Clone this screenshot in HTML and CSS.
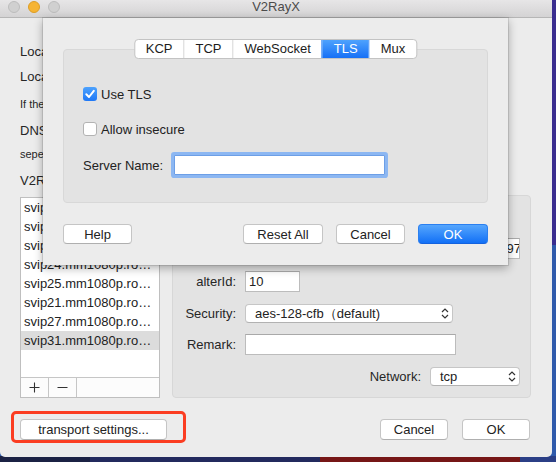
FILE: index.html
```html
<!DOCTYPE html>
<html>
<head>
<meta charset="utf-8">
<title>V2RayX</title>
<link rel="stylesheet" href="styles.css">
</head>
<body>
<div class="window">
  <div class="titlebar">
    <div class="lights">
      <span class="light"></span>
      <span class="light min"></span>
      <span class="light"></span>
    </div>
    <div class="title">V2RayX</div>
    <div></div>
  </div>

  <div class="content">
    <div class="lbl r1">Local socks port:</div>
    <div class="lbl r2">Local http port:</div>
    <div class="lbl small r3">If the http port is not needed, leave it empty.</div>
    <div class="lbl r4">DNS servers:</div>
    <div class="lbl small r5">seperated by commas</div>
    <div class="lbl r6">V2Ray servers:</div>

    <div class="servers">
      <div class="list">
        <div class="rows">
          <div class="row">svip22.mm1080p.ro…</div>
          <div class="row">svip23.mm1080p.ro…</div>
          <div class="row">svip26.mm1080p.ro…</div>
          <div class="row">svip24.mm1080p.ro…</div>
          <div class="row">svip25.mm1080p.ro…</div>
          <div class="row">svip21.mm1080p.ro…</div>
          <div class="row">svip27.mm1080p.ro…</div>
          <div class="row sel">svip31.mm1080p.ro…</div>
        </div>
        <div class="listbar">
          <span class="lb-btn"><svg width="11" height="11" viewBox="0 0 11 11"><path d="M5.5 0.5V10.5M0.5 5.5H10.5" stroke="#333" stroke-width="1.1" fill="none"/></svg></span>
          <span class="lb-btn"><svg width="11" height="11" viewBox="0 0 11 11"><path d="M0.5 5.5H10.5" stroke="#333" stroke-width="1.1" fill="none"/></svg></span>
        </div>
      </div>

      <div class="details">
        <div class="drow">
          <span class="dlabel">Address:</span>
          <span class="field addr">svip31.mm1080p.rocks</span>
          <span class="colon">:</span>
          <span class="field port">443</span>
        </div>
        <div class="drow g12">
          <span class="dlabel">User ID:</span>
          <span class="field uid"><span class="uid-text">6b1f0e2c-8d4a-4f7e-b3c2-5a9d0e1f2c97</span></span>
        </div>
        <div class="drow g12">
          <span class="dlabel">alterId:</span>
          <span class="field alter">10</span>
        </div>
        <div class="drow g11">
          <span class="dlabel">Security:</span>
          <span class="popup sec">aes-128-cfb（default)<svg class="chev" width="8" height="13" viewBox="0 0 8 13"><path d="M1 5L4 2L7 5M1 8L4 11L7 8" stroke="#333" stroke-width="1.2" fill="none"/></svg></span>
        </div>
        <div class="drow g10">
          <span class="dlabel">Remark:</span>
          <span class="field remark"></span>
        </div>
        <div class="drow g11 end">
          <span class="nlabel">Network:</span>
          <span class="popup net">tcp<svg class="chev" width="8" height="13" viewBox="0 0 8 13"><path d="M1 5L4 2L7 5M1 8L4 11L7 8" stroke="#333" stroke-width="1.2" fill="none"/></svg></span>
        </div>
      </div>
    </div>

    <div class="bottom">
      <div class="transport">
        <button class="btn tbtn">transport settings...</button>
      </div>
      <div class="actions">
        <button class="btn w68">Cancel</button>
        <button class="btn w68">OK</button>
      </div>
    </div>
  </div>

  <div class="sheet">
    <div class="group">
      <div class="seg">
        <span class="sg">KCP</span>
        <span class="sg">TCP</span>
        <span class="sg">WebSocket</span>
        <span class="sg on">TLS</span>
        <span class="sg">Mux</span>
      </div>
      <label class="check">
        <span class="box checked"><svg width="14" height="14" viewBox="0 0 14 14"><path d="M3.3 7.3L6 10L10.8 3.8" stroke="#fff" stroke-width="2" fill="none" stroke-linecap="round" stroke-linejoin="round"/></svg></span>
        <span>Use TLS</span>
      </label>
      <label class="check c2">
        <span class="box"></span>
        <span>Allow insecure</span>
      </label>
      <div class="srow">
        <span>Server Name:</span>
        <span class="sfield"></span>
      </div>
    </div>
    <div class="sheet-actions">
      <button class="btn s-help">Help</button>
      <button class="btn s-reset">Reset All</button>
      <button class="btn s-cancel">Cancel</button>
      <button class="btn s-ok">OK</button>
    </div>
  </div>
</div>
</body>
</html>
```

FILE: styles.css
```css
* { box-sizing: border-box; }

html, body { margin: 0; }

body {
  width: 556px;
  height: 462px;
  overflow: hidden;
  font-family: "Liberation Sans", Arial, sans-serif;
  font-size: 13px;
  color: #262626;
  background:
    linear-gradient(90deg, #1b2244 0 90px, #232a5e 90px 320px, #761616 320px 520px, #2b3f86 520px) left bottom / 100% 6px no-repeat,
    linear-gradient(180deg, #3a2d8f 0 245px, #2f5aab 245px);
}

.window {
  position: relative;
  width: 552px;
  height: 461px;
  margin-top: -4px;
  background: #ececec;
  border-radius: 5px;
  overflow: hidden;
}

.titlebar {
  height: 22px;
  display: grid;
  grid-template-columns: 1fr auto 1fr;
  align-items: center;
  padding: 0 8px;
  background: linear-gradient(#ebeaeb, #d4d3d4);
  border-bottom: 1px solid #b6b6b6;
}

.lights { display: flex; gap: 8px; }

.light {
  width: 12px;
  height: 12px;
  border-radius: 50%;
  background: #d0d0d0;
  border: 1px solid #bcbcbc;
}

.light.min { background: #f6b433; border-color: #dc9d26; }

.title { color: #4b4b4b; font-size: 13px; }

.content { padding: 0 21px 0 20px; }

.lbl { height: 16px; line-height: 16px; white-space: nowrap; }
.small { font-size: 11px; height: 14px; line-height: 14px; }
.r1 { margin-top: 26px; }
.r2 { margin-top: 9px; }
.r3 { margin-top: 12px; }
.r4 { margin-top: 12px; }
.r5 { margin-top: 8px; }
.r6 { margin-top: 12px; }

.servers {
  display: flex;
  gap: 12px;
  margin-top: 6px;
  height: 203px;
}

.list {
  width: 140px;
  height: 201px;
  margin-top: 2px;
  background: #fff;
  border: 1px solid #bfbfbf;
  display: flex;
  flex-direction: column;
}

.rows { flex: 1; }

.row {
  height: 19px;
  line-height: 19px;
  padding-left: 3px;
  white-space: nowrap;
  overflow: hidden;
  color: #222;
}

.row.sel { background: #dcdcdc; }

.listbar {
  height: 20px;
  border-top: 1px solid #c6c6c6;
  display: flex;
  background: #fcfcfc;
}

.lb-btn {
  width: 28px;
  border-right: 1px solid #c6c6c6;
  display: flex;
  align-items: center;
  justify-content: center;
}

.details {
  flex: 1;
  background: #e3e3e3;
  border: 1px solid #d7d7d7;
  border-radius: 4px;
  padding: 9px 10px 0 0;
}

.drow { display: flex; align-items: center; height: 21px; }
.g12 { margin-top: 12px; }
.g11 { margin-top: 11px; }
.g10 { margin-top: 10px; }
.drow.end { justify-content: flex-end; }

.dlabel { width: 63px; text-align: right; margin-right: 9px; }
.nlabel { margin-right: 9px; }

.field {
  height: 21px;
  background: #fff;
  border: 1px solid #bcbcbc;
  border-top-color: #a9a9a9;
  padding: 0 3px;
  display: flex;
  align-items: center;
  white-space: nowrap;
  color: #222;
}

.addr { width: 190px; }
.colon { margin: 0 4px; }
.port { width: 50px; }
.uid { flex: 1; justify-content: flex-end; overflow: hidden; padding-right: 0; }
.uid-text { margin-right: -2px; }
.alter { width: 55px; }
.remark { width: 211px; }

.popup {
  height: 19px;
  background: #fff;
  border: 1px solid #c6c6c6;
  border-bottom-color: #b2b2b2;
  border-radius: 4px;
  display: flex;
  align-items: center;
  justify-content: space-between;
  padding: 0 3px 0 9px;
  color: #222;
  white-space: nowrap;
}

.sec { width: 208px; }
.net { width: 90px; }

.bottom {
  display: flex;
  justify-content: space-between;
  align-items: flex-start;
  margin-top: 21px;
}

.btn {
  height: 21px;
  padding: 0;
  margin: 0;
  background: #fff;
  border: 1px solid #c5c5c5;
  border-bottom-color: #afafaf;
  border-radius: 4px;
  font-family: "Liberation Sans", Arial, sans-serif;
  font-size: 13px;
  color: #222;
  display: flex;
  align-items: center;
  justify-content: center;
}

.transport { position: relative; }
.tbtn { width: 147px; }
.transport::after {
  content: "";
  position: absolute;
  left: -9px;
  top: -8px;
  right: -19px;
  bottom: -3px;
  border: 3px solid #fb3d22;
  border-radius: 5px;
}

.actions { display: flex; gap: 14px; margin-right: 1px; }
.w68 { width: 68px; }

/* sheet */
.sheet {
  position: absolute;
  left: 43px;
  top: 22px;
  width: 465px;
  height: 247px;
  background: #ececec;
  padding: 31px 20px 0;
  box-shadow: 0 3px 9px rgba(0, 0, 0, 0.32), 0 0 0 1px rgba(0, 0, 0, 0.1);
}

.group {
  position: relative;
  height: 154px;
  background: #e3e3e3;
  border: 1px solid #d8d8d8;
  border-radius: 4px;
  padding: 36px 19px 0;
}

.seg {
  position: absolute;
  top: -11px;
  left: 50%;
  transform: translateX(-50%);
  display: flex;
  height: 20px;
  background: #fff;
  border: 1px solid #c3c3c3;
  border-radius: 4px;
  overflow: hidden;
}

.sg {
  padding: 0 11px;
  line-height: 18px;
  border-left: 1px solid #d6d6d6;
  color: #1c1c1c;
  white-space: nowrap;
}

.sg:first-child { border-left: none; }
.sg.on { background: linear-gradient(#4ea2fd, #1670f6); color: #fff; border-left-color: #3a8cf8; }
.sg.on + .sg { border-left-color: #3a8cf8; }

.check { display: flex; align-items: center; height: 16px; gap: 4px; color: #222; }
.c2 { margin-top: 19px; }

.box {
  width: 14px;
  height: 14px;
  border-radius: 3px;
  background: #fff;
  border: 1px solid #b3b3b3;
}

.box.checked {
  background: linear-gradient(#4da2fd, #1f78f6);
  border: none;
}

.box svg { display: block; }

.srow { display: flex; align-items: center; height: 20px; margin-top: 18px; color: #222; }

.sfield {
  width: 211px;
  height: 20px;
  margin-left: 11px;
  background: #fff;
  border: 1px solid #6d9fe6;
  box-shadow: 0 0 0 3px #8cb7f2;
  border-radius: 1px;
}

.sheet-actions { display: flex; gap: 13px; margin-top: 21px; }
.sheet-actions .btn { height: 20px; }
.s-help { width: 69px; margin-right: auto; }
.s-reset { width: 80px; }
.s-cancel { width: 69px; }
.s-ok {
  width: 70px;
  background: linear-gradient(#55a6fd, #1270f6);
  border-color: #2a7ff0;
  border-bottom-color: #1462de;
  color: #fff;
}
```
